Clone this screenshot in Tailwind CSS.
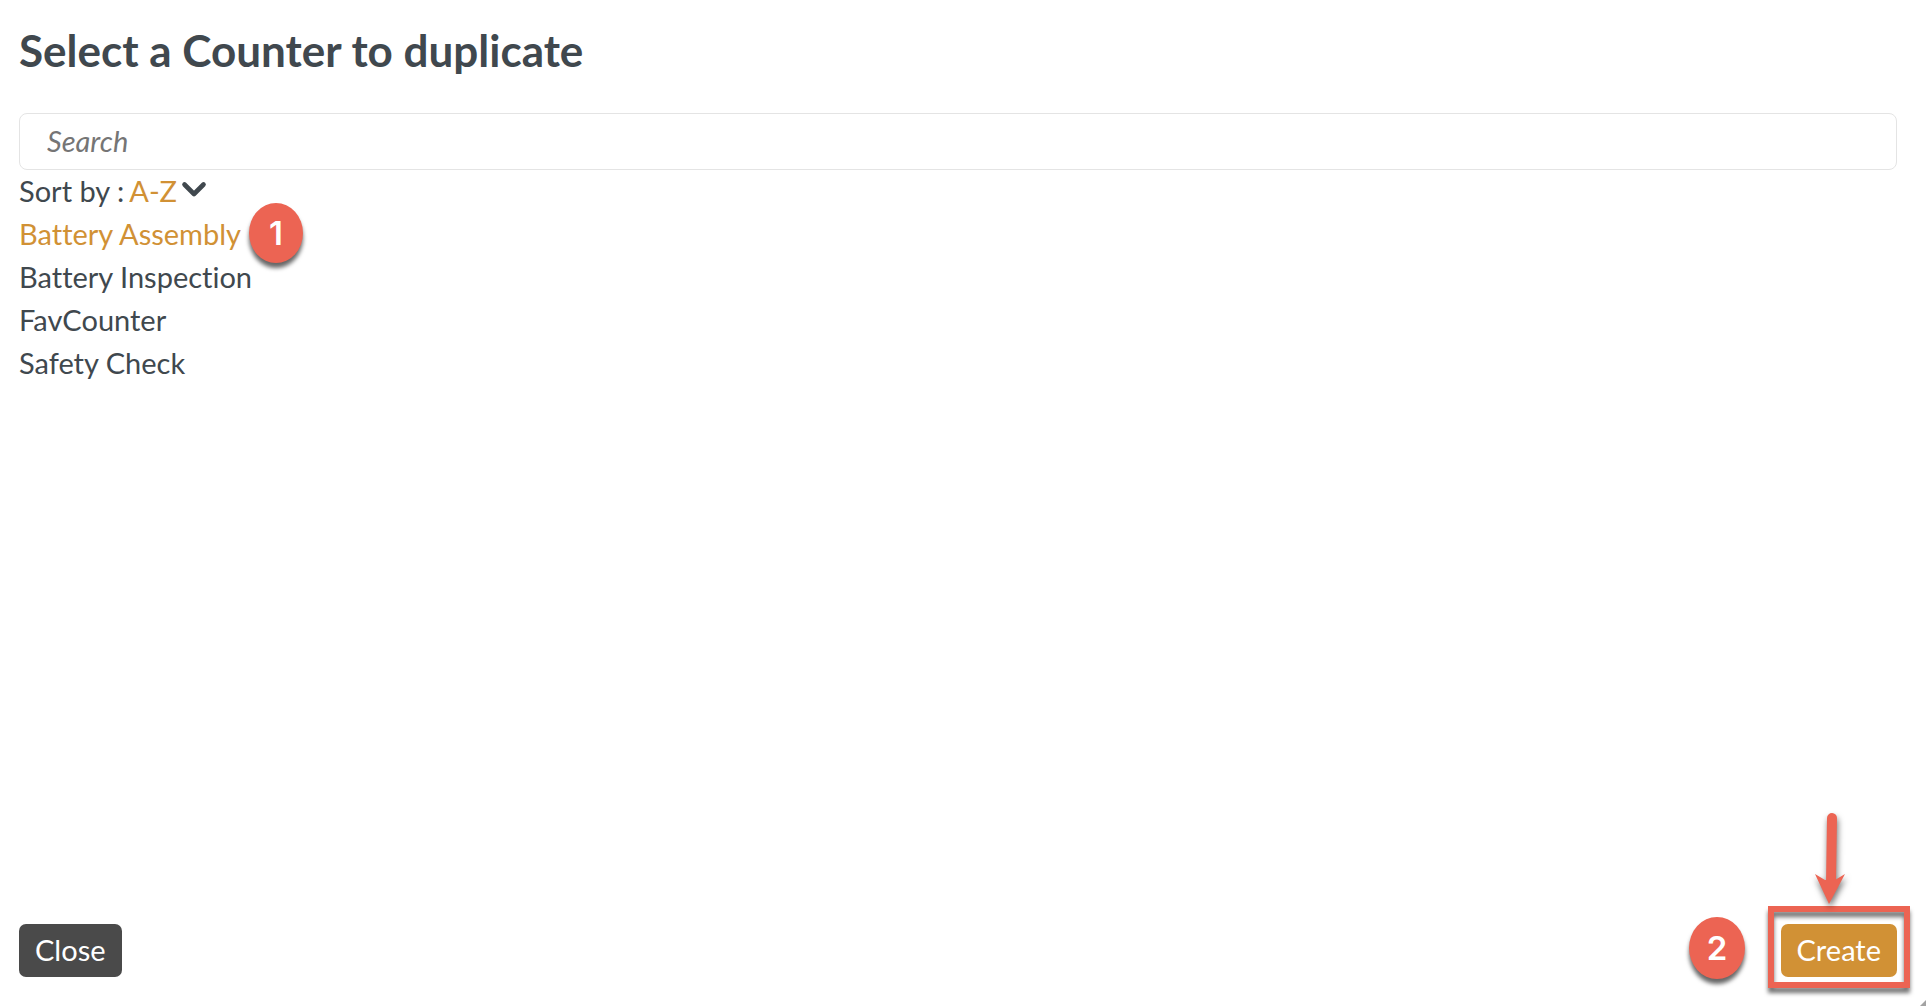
<!DOCTYPE html>
<html lang="en">
<head>
    <meta charset="UTF-8"/>
    <meta name="viewport" content="width=device-width, initial-scale=1.0"/>
    <title>Select a Counter to duplicate</title>
    <script src="https://cdn.jsdelivr.net/npm/@tailwindcss/browser@4"></script>
</head>
<body class="relative flex min-h-screen flex-col overflow-x-hidden bg-white pt-[26px] pr-[29px] pb-[29px] pl-[19px] font-['Lato',sans-serif] text-[29px] leading-[43px] text-[#40484e] [font-variant-ligatures:none]">

<!-- Header -->
<header class="mb-[39px]">
    <h1 class="text-[44px] leading-[48px] font-bold">Select a Counter to duplicate</h1>
</header>

<!-- Counter list -->
<main class="flex grow flex-col">
    <input type="search" aria-label="Search" placeholder="Search"
           class="h-[57px] w-full rounded-lg border border-[#e4e4e4] px-[27px] pb-[2px] italic placeholder:text-[#757575] focus:outline-none"/>

    <div class="-mt-px flex items-center">
        <label for="sort" class="mr-[5px]">Sort by :</label>
        <div class="relative">
            <select id="sort" class="block appearance-none bg-transparent pr-[30px] text-[#d19135] focus:outline-none">
                <option>A-Z</option>
                <option>Z-A</option>
            </select>
            <svg class="pointer-events-none absolute top-[12px] right-0 h-[17px] w-[26px]" viewBox="0 0 26 17" fill="none"
                 stroke="currentColor" stroke-width="4.6" stroke-linecap="round" stroke-linejoin="round">
                <path d="M3.5 3.5 13 13 22.5 3.5"/>
            </svg>
        </div>
    </div>

    <ul>
        <li class="flex">
            <button type="button" aria-pressed="true" class="relative text-[#d19135]">
                Battery Assembly
                <span class="absolute top-[-9px] left-[230px] flex h-[60px] w-[54px] items-center justify-center rounded-[50%] bg-[#ec6453] font-['Inter',sans-serif] text-[33px] font-semibold text-white shadow-[0_5px_4px_rgba(0,0,0,0.6)]">1</span>
            </button>
        </li>
        <li><button type="button">Battery Inspection</button></li>
        <li><button type="button">FavCounter</button></li>
        <li><button type="button">Safety Check</button></li>
    </ul>
</main>

<!-- Actions -->
<footer class="flex items-center justify-between text-white">
    <button type="button" class="h-[53px] rounded-[7px] bg-[#4a4a4a] px-4 pb-[3px]">Close</button>
    <div class="relative">
        <button type="submit" class="block h-[53px] rounded-[7px] bg-[#d19135] px-4 pb-[3px]">Create</button>

        <!-- Callout around the Create button -->
        <span class="pointer-events-none absolute -inset-x-[13px] -top-[18px] -bottom-[11px] border-[6px] border-[#ec6453] drop-shadow-[0_5px_2px_rgba(0,0,0,0.55)]"></span>
        <svg class="pointer-events-none absolute right-[49px] bottom-[72px] h-[100px] w-[40px] overflow-visible drop-shadow-[1px_4px_3px_rgba(0,0,0,0.55)]" viewBox="0 0 40 100">
            <path d="M24 13 23 78" stroke="#ec6453" stroke-width="10" stroke-linecap="round"/>
            <path d="M7 69 17 75H27L37 69 21 99Z" fill="#ec6453"/>
        </svg>
        <span class="absolute top-[-7px] right-[152px] flex h-[62px] w-[56px] items-center justify-center rounded-[50%] bg-[#ec6453] font-['Inter',sans-serif] text-[33px] font-semibold text-white shadow-[0_5px_4px_rgba(0,0,0,0.6)]">2</span>
    </div>
</footer>

<!-- Resize corner -->
<svg class="absolute right-0 bottom-0 h-[6px] w-[6px]" viewBox="0 0 6 6">
    <path d="M6 0V6H0Z" fill="#a3a3a3"/>
</svg>

</body>
</html>
